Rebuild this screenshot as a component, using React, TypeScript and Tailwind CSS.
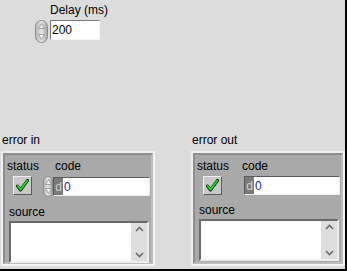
import React from "react";

const font = { fontFamily: '"Liberation Sans", Arial, sans-serif' };

function Spinner({ className = "" }: { className?: string }) {
  return (
    <div
      className={`flex flex-col items-center justify-between rounded-full border border-[#8c8c8c] bg-gradient-to-r from-[#b8b8b8] via-[#e8e8e8] to-[#a8a8a8] py-[2px] ${className}`}
    >
      <svg width="7" height="6" viewBox="0 0 7 6">
        <path d="M3.5 0.5 L6.5 5.5 L0.5 5.5 Z" fill="#f4f4f4" stroke="#8a8a8a" strokeWidth="0.8" />
      </svg>
      <svg width="7" height="6" viewBox="0 0 7 6">
        <path d="M3.5 5.5 L6.5 0.5 L0.5 0.5 Z" fill="#f4f4f4" stroke="#8a8a8a" strokeWidth="0.8" />
      </svg>
    </div>
  );
}

function StatusButton() {
  return (
    <div className="flex h-[19px] w-[19px] items-center justify-center border border-t-[#f0f0f0] border-l-[#f0f0f0] border-b-[#5a5a5a] border-r-[#5a5a5a] bg-[#c8c8c8]">
      <svg width="13" height="13" viewBox="0 0 13 13">
        <path d="M1.5 7 L4.5 11 L11.5 1.5" fill="none" stroke="#0a3a0a" strokeWidth="3" strokeLinecap="round" strokeLinejoin="round" />
        <path d="M1.8 7 L4.5 10.5 L11.2 1.8" fill="none" stroke="#22e022" strokeWidth="1.6" strokeLinecap="round" strokeLinejoin="round" />
      </svg>
    </div>
  );
}

function CodeField({ spinner }: { spinner: boolean }) {
  return (
    <div className="flex items-center">
      {spinner ? <Spinner className="h-[21px] w-[10px]" /> : <div className="w-[14px]" />}
      <div className={`flex h-[19px] border border-t-[#5a5a5a] border-l-[#5a5a5a] border-b-[#ececec] border-r-[#ececec] ${spinner ? "w-[97px]" : "w-[96px]"}`}>
        <div className="flex w-[9px] items-center justify-end bg-[#7a7a7a] pr-[1px] text-[12px] text-[#d0d0d0]">d</div>
        <div className="flex flex-1 items-center bg-white pl-[1px] text-[12px] text-[#1a2a8a]">0</div>
      </div>
    </div>
  );
}

function ErrorCluster({ label, spinner }: { label: string; spinner: boolean }) {
  return (
    <div className="flex flex-col">
      <div className="mb-[4px] pl-[1px] text-[12px] leading-[13px] text-black">{label}</div>
      <div className="h-[115px] w-[154px] border-[2px] border-t-[#f0f0f0] border-l-[#f0f0f0] border-b-[#f4f4f4] border-r-[#f4f4f4] bg-[#dcdcdc]">
        <div className="h-full w-full border-[2px] border-t-[#8e8e8e] border-l-[#8e8e8e] border-b-[#bdbdbd] border-r-[#bdbdbd] bg-[#a9a9a9] px-[1px] pt-[4px]">
          <div className="flex">
            <div className="flex w-[44px] flex-col items-start">
              <span className="pl-[1px] text-[12px] leading-[14px] text-black">status</span>
              <div className="ml-[7px] mt-[3px]">
                <StatusButton />
              </div>
            </div>
            <div className="flex flex-col">
              <span className="pl-[6px] text-[12px] leading-[14px] text-black">code</span>
              <div className="mt-[3px] -ml-[6px]">
                <CodeField spinner={spinner} />
              </div>
            </div>
          </div>
          <div className="mt-[8px] pl-[3px] text-[12px] leading-[14px] text-black">source</div>
          <div className="ml-[3px] mt-[2px] flex h-[42px] w-[140px] border-[2px] border-t-[#6a6a6a] border-l-[#6a6a6a] border-b-[#ededed] border-r-[#ededed] bg-white">
            <div className="flex-1" />
            <div className="flex w-[16px] flex-col items-center justify-between bg-[#dedede] py-[3px]">
              <svg width="9" height="6" viewBox="0 0 9 6">
                <path d="M1 5 L4.5 1.5 L8 5" fill="none" stroke="#6c6c6c" strokeWidth="1.6" />
              </svg>
              <svg width="9" height="6" viewBox="0 0 9 6">
                <path d="M1 1 L4.5 4.5 L8 1" fill="none" stroke="#6c6c6c" strokeWidth="1.6" />
              </svg>
            </div>
          </div>
        </div>
      </div>
    </div>
  );
}

export default function App() {
  return (
    <div
      className="flex h-[271px] w-[347px] flex-col border-b-[2px] border-r-[2px] border-black bg-[#dcdcdc]"
      style={font}
    >
      <div className="ml-[35px] mt-[3px] flex flex-col">
        <span className="ml-[15px] text-[12px] leading-[14px] text-black">Delay (ms)</span>
        <div className="mt-[3px] flex items-start">
          <Spinner className="h-[23px] w-[13px]" />
          <div className="ml-[2px] flex h-[20px] w-[50px] items-center border border-t-[#7a7a7a] border-l-[#7a7a7a] border-b-[#f4f4f4] border-r-[#f4f4f4] bg-white pl-[1px] text-[12px] text-black">
            200
          </div>
        </div>
      </div>
      <div className="ml-[1px] mt-[91px] flex gap-[36px]">
        <ErrorCluster label="error in" spinner={true} />
        <ErrorCluster label="error out" spinner={false} />
      </div>
    </div>
  );
}
